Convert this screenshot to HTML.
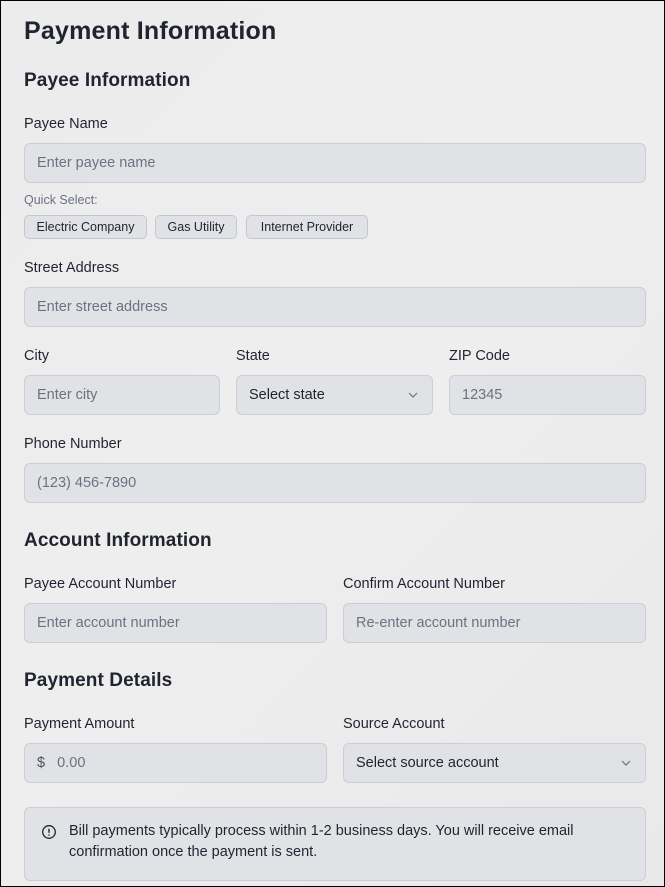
<!DOCTYPE html>
<html><head><style>
*{margin:0;padding:0;box-sizing:border-box}
html,body{width:665px;height:887px;overflow:hidden}
body{background:linear-gradient(135deg,#ececec,#efeeee 50%,#e9e9e9);border:1px solid #000;position:relative;font-family:"Liberation Sans",Arial,sans-serif;color:#1f2430}
.a{position:absolute;white-space:nowrap}
.h1{font-size:25px;font-weight:bold;line-height:30px;letter-spacing:0.2px}
.h2{font-size:19px;font-weight:bold;line-height:22px;letter-spacing:0.1px}
.lb{font-size:14.5px;line-height:18px}
.in{position:absolute;height:40px;background:#e1e2e5;border:1px solid #c9ced8;border-radius:6px;font-size:14.5px;color:#6b7280;line-height:38px;padding-left:12px}
.sel{color:#1f2430}
.chip{position:absolute;top:214px;height:24px;background:#e1e2e5;border:1px solid #c2c8d2;border-radius:5px;font-size:12.5px;line-height:22px;text-align:center;color:#1f2430}
.chev{position:absolute;right:14px;top:14px}
</style></head><body>
<div class="a h1" style="left:23px;top:15px">Payment Information</div>
<div class="a h2" style="left:23px;top:69px">Payee Information</div>
<div class="a lb" style="left:23px;top:114px">Payee Name</div>
<div class="in" style="left:23px;top:142px;width:622px">Enter payee name</div>
<div class="a" style="left:23px;top:192px;font-size:12.5px;color:#6b7280">Quick Select:</div>
<div class="chip" style="left:23px;width:123px">Electric Company</div>
<div class="chip" style="left:154px;width:82px">Gas Utility</div>
<div class="chip" style="left:245px;width:122px">Internet Provider</div>
<div class="a lb" style="left:23px;top:258px">Street Address</div>
<div class="in" style="left:23px;top:286px;width:622px">Enter street address</div>
<div class="a lb" style="left:23px;top:346px">City</div>
<div class="a lb" style="left:235px;top:346px">State</div>
<div class="a lb" style="left:448px;top:346px">ZIP Code</div>
<div class="in" style="left:23px;top:374px;width:196px">Enter city</div>
<div class="in sel" style="left:235px;top:374px;width:197px">Select state<svg class="chev" width="10" height="10" viewBox="0 0 10 10"><path d="M1 3l4 4 4-4" fill="none" stroke="#6b7280" stroke-width="1.2"/></svg></div>
<div class="in" style="left:448px;top:374px;width:197px">12345</div>
<div class="a lb" style="left:23px;top:434px">Phone Number</div>
<div class="in" style="left:23px;top:462px;width:622px">(123) 456-7890</div>
<div class="a h2" style="left:23px;top:529px">Account Information</div>
<div class="a lb" style="left:23px;top:574px">Payee Account Number</div>
<div class="a lb" style="left:342px;top:574px">Confirm Account Number</div>
<div class="in" style="left:23px;top:602px;width:303px">Enter account number</div>
<div class="in" style="left:342px;top:602px;width:303px">Re-enter account number</div>
<div class="a h2" style="left:23px;top:669px">Payment Details</div>
<div class="a lb" style="left:23px;top:714px">Payment Amount</div>
<div class="a lb" style="left:342px;top:714px">Source Account</div>
<div class="in" style="left:23px;top:742px;width:303px"><span style="color:#4b5563">$</span>&nbsp;&nbsp;&nbsp;0.00</div>
<div class="in sel" style="left:342px;top:742px;width:303px">Select source account<svg class="chev" width="10" height="10" viewBox="0 0 10 10"><path d="M1 3l4 4 4-4" fill="none" stroke="#6b7280" stroke-width="1.2"/></svg></div>
<div style="position:absolute;left:23px;top:806px;width:622px;height:74px;background:#e1e2e5;border:1px solid #c9ced8;border-radius:6px"></div>
<svg class="a" style="left:40px;top:823px" width="16" height="16" viewBox="0 0 16 16"><circle cx="8" cy="8" r="6.3" fill="none" stroke="#1f2430" stroke-width="1.3"/><path d="M8 4.8v4" stroke="#1f2430" stroke-width="1.4"/><circle cx="8" cy="11" r=".8" fill="#1f2430"/></svg>
<div class="a" style="left:68px;top:820px;font-size:14.5px;line-height:21px">Bill payments typically process within 1-2 business days. You will receive email<br>confirmation once the payment is sent.</div>
</body></html>
